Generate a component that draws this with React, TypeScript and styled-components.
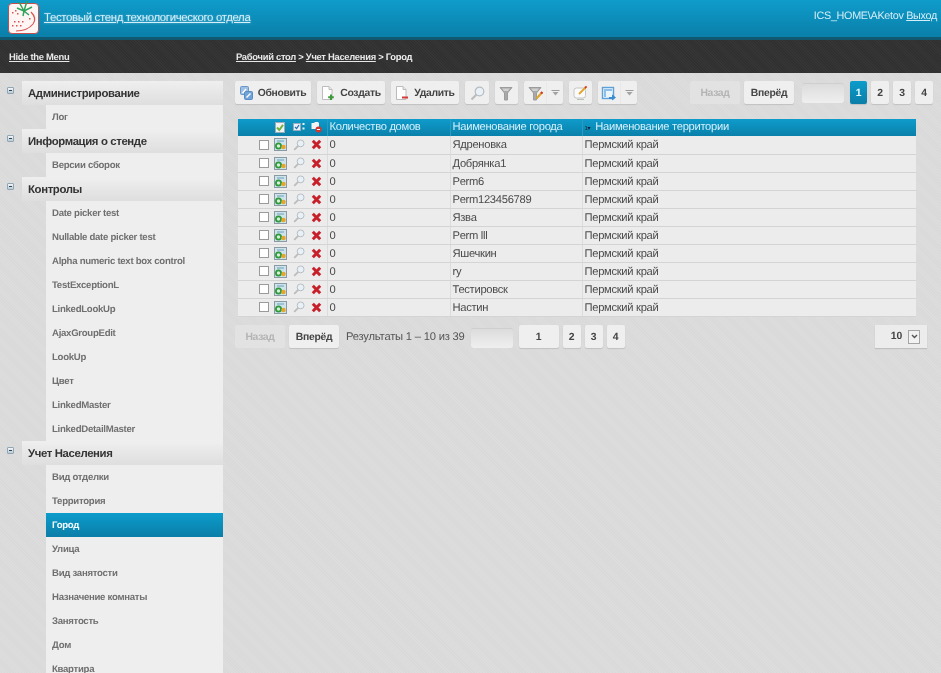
import { createGlobalStyle, styled } from 'styled-components'

const GlobalStyle = createGlobalStyle`
  html, body {
    margin: 0;
    height: 100%;
    overflow: hidden;
    background: #dcdcdc;
    font-family: "Liberation Sans", Arial, sans-serif;
    text-rendering: geometricPrecision;
  }
  * { box-sizing: border-box; }
`

const Page = styled.div`
  width: 941px;
  height: 673px;
  overflow: hidden;
  filter: blur(0.35px);
  background: repeating-linear-gradient(45deg, #dddddd 0 1px, #d9d9d9 1px 2px);
`

const Header = styled.header`
  height: 40px;
  display: flex;
  align-items: center;
  justify-content: space-between;
  padding: 0 4px 2px 8px;
  background: linear-gradient(#0f9ccb, #0a7fa9);
  border-bottom: 3px solid #10586f;
`

const Brand = styled.div`
  display: flex;
  align-items: center;
  gap: 5px;
`

const LogoBox = styled.div`
  width: 31px;
  height: 31px;
  margin-top: 1px;
  background: #fdf6f5;
  border: 1px solid #c0504d;
  border-radius: 4px;
  svg {
    display: block;
    overflow: visible;
  }
`

const BrandLink = styled.a`
  color: #d3f0fa;
  font-size: 11.4px;
  letter-spacing: -0.33px;
  text-decoration: underline;
  text-shadow: 0 0 2px rgba(255, 255, 255, 0.4);
`

const UserBox = styled.div`
  color: #d3eef8;
  font-size: 10.8px;
  letter-spacing: -0.3px;
  margin-bottom: 3px;
  a {
    color: #d3eef8;
    text-decoration: underline;
  }
`

const NavBar = styled.nav`
  height: 33px;
  display: flex;
  align-items: center;
  padding-left: 9px;
  color: #eee;
  font-size: 9.4px;
  letter-spacing: -0.28px;
  font-weight: bold;
  background: repeating-linear-gradient(45deg, #353535 0 1px, #303030 1px 2px);
  a {
    color: #e8e8e8;
    text-decoration: underline;
  }
`

const MenuToggle = styled.a`
  width: 227px;
`

const Body = styled.div`
  display: flex;
  padding-top: 8px;
`

const Sidebar = styled.aside`
  width: 223px;
  flex: none;
`

const GroupRow = styled.div`
  height: 24px;
  margin-left: 22px;
  position: relative;
  display: flex;
  align-items: center;
  padding: 2px 0 0 6px;
  color: #333;
  font-size: 11.4px;
  letter-spacing: -0.38px;
  font-weight: bold;
  background: linear-gradient(#efefef, #dedede);
`

const Toggle = styled.span`
  position: absolute;
  left: -15px;
  top: 6px;
  width: 7px;
  height: 7px;
  border: 1px solid #8fa6b4;
  border-radius: 1px;
  background: linear-gradient(#f4f7f9, #b9c9d3);
  &::after {
    content: '';
    position: absolute;
    left: 1px;
    right: 1px;
    top: 2px;
    height: 1px;
    background: #345;
  }
`

const MenuItem = styled.div<{ $active?: boolean }>`
  height: 24px;
  margin-left: 46px;
  display: flex;
  align-items: center;
  padding: 1px 0 0 6px;
  font-size: 9.6px;
  letter-spacing: -0.28px;
  font-weight: bold;
  color: ${(p) => (p.$active ? '#f2fbff' : '#707070')};
  background: ${(p) => (p.$active ? 'linear-gradient(#0c9ccb, #0a7ea8)' : '#eeeeee')};
`

const Main = styled.main`
  flex: 1;
  min-width: 0;
  padding-left: 12px;
`

const Toolbar = styled.div`
  height: 24px;
  display: flex;
  align-items: flex-start;
  gap: 6px;
  padding-right: 8px;
`

const Btn = styled.div<{ $w?: number; $disabled?: boolean; $active?: boolean; $split?: boolean }>`
  height: 23px;
  ${(p) => (p.$w ? `width: ${p.$w}px;` : '')}
  flex: none;
  display: flex;
  align-items: center;
  justify-content: center;
  gap: ${(p) => (p.$split ? 0 : 5)}px;
  padding-top: 1px;
  font-size: 10.4px;
  letter-spacing: -0.33px;
  font-weight: bold;
  border-radius: 2px;
  color: ${(p) => (p.$active ? '#e8f8ff' : p.$disabled ? '#b4b4b4' : '#444')};
  background: ${(p) =>
    p.$active ? 'linear-gradient(#0c9ccb, #0a7ea8)' : p.$disabled ? '#e2e2e2' : '#efefef'};
  box-shadow: ${(p) => (p.$disabled ? 'none' : '0 1px 1px rgba(0, 0, 0, 0.12)')};
`

const Divider = styled.span`
  width: 1px;
  height: 22px;
  background: #e8e8e8;
  margin: 0 4px 0 3px;
`

const Spacer = styled.div`
  flex: 1;
`

const NavPair = styled.div`
  display: flex;
  gap: 4px;
  margin-right: 2px;
`

const PageInput = styled.div<{ $w: number }>`
  width: ${(p) => p.$w}px;
  height: 20px;
  margin-top: 2px;
  flex: none;
  border-radius: 3px;
  background: linear-gradient(#dcdcdc, #efefef);
  border-top: 1px solid #cfcfcf;
`

const PageNums = styled.div`
  display: flex;
  gap: 4px;
`

const Grid = styled.table`
  width: 678px;
  margin: 14px 0 0 3px;
  border-collapse: collapse;
  table-layout: fixed;
  font-size: 11.2px;
  letter-spacing: -0.3px;
  color: #4a4a4a;
`

const HeadCell = styled.th`
  height: 17px;
  padding: 0 0 1px 2px;
  font-weight: normal;
  text-align: left;
  white-space: nowrap;
  color: #d5f0fa;
  background: linear-gradient(#0e9bcb, #0a80aa);
  border-left: 1px solid #2a9cc2;
  &:first-child { border-left: 0; }
`

const SortMark = styled.span`
  font-size: 6px;
  color: #123;
  margin-right: 5px;
`

const Cell = styled.td`
  height: 18px;
  padding: 1px 0 0 2px;
  background: #ececec;
  border-left: 1px solid #dcdcdc;
  border-bottom: 1px solid #d4d4d4;
  white-space: nowrap;
  &:first-child { border-left: 0; padding-top: 0; }
`

const ActionCell = styled.div`
  display: flex;
  align-items: center;
  justify-content: flex-end;
  gap: 6px;
  padding-right: 5px;
`

const HeadCheck = styled.span`
  display: flex;
  margin-right: 2px;
`

const CheckBox = styled.span`
  width: 10px;
  height: 10px;
  flex: none;
  background: #fff;
  border: 1px solid #9a9a9a;
  margin-right: -1px;
`

const Pager = styled.div`
  display: flex;
  align-items: center;
  gap: 6px;
  margin-top: 8px;
  padding-right: 14px;
  height: 24px;
`

const PagerText = styled.span`
  font-size: 11.2px;
  letter-spacing: -0.2px;
  color: #555;
  margin-left: -1px;
`

const PageSize = styled.div`
  width: 52px;
  height: 23px;
  flex: none;
  display: flex;
  align-items: center;
  justify-content: flex-end;
  gap: 6px;
  padding-right: 7px;
  font-size: 10.4px;
  letter-spacing: -0.2px;
  font-weight: bold;
  color: #444;
  background: #ececec;
  box-shadow: 0 1px 1px rgba(0, 0, 0, 0.12);
`

const SizeArrow = styled.span`
  width: 12px;
  height: 14px;
  border: 1px solid #a5a5a5;
  background: #f2f2f2;
  display: flex;
  align-items: center;
  justify-content: center;
`

const Logo = () => (
  <LogoBox>
    <svg width="29" height="29" viewBox="0 0 29 29">
      <path d="M22 8 C26 12 27 16 24 20 C20 25 13 27 7 27" fill="none" stroke="#d9534f" strokeWidth="1.2" />
      <path d="M15 7 L10 -2 M15 7 L18 -3 M15 7 L8 4 M15 7 L23 3 M15 7 L14 12 M15 7 L20 11" stroke="#2fa35a" strokeWidth="1.5" />
      <g fill="#d9534f">
        <rect x="6" y="6" width="1.5" height="1.5" />
        <rect x="3" y="8" width="1.5" height="1.5" />
        <rect x="8" y="9" width="1.5" height="1.5" />
        <rect x="5" y="17" width="1.5" height="1.5" />
        <rect x="9" y="17" width="1.5" height="1.5" />
        <rect x="13" y="17" width="1.5" height="1.5" />
        <rect x="3" y="21" width="1.5" height="1.5" />
        <rect x="7" y="21" width="1.5" height="1.5" />
        <rect x="11" y="21" width="1.5" height="1.5" />
        <rect x="20" y="14" width="1.5" height="1.5" />
      </g>
    </svg>
  </LogoBox>
)

const RefreshIcon = () => (
  <svg width="13" height="14" viewBox="0 0 13 14">
    <rect x="0.5" y="0.5" width="8" height="8" rx="1" fill="#9dbfe4" stroke="#6b96c8" />
    <rect x="4.5" y="5.5" width="8" height="8" rx="1" fill="#6fa3da" stroke="#5a8bc2" />
    <path d="M2.5 7 L6 3 M6.5 11.5 L10.5 7.5" stroke="#fff" strokeWidth="1.4" />
  </svg>
)

const PageIcon = ({ sign }: { sign: 'plus' | 'minus' }) => (
  <svg width="14" height="16" viewBox="0 0 14 16">
    <path d="M1.5 1.5 H8 L11 4.5 V14.5 H1.5 Z" fill="#fff" stroke="#bcbcbc" />
    <path d="M8 1.5 V4.5 H11" fill="#e6e6e6" stroke="#bcbcbc" />
    {sign === 'plus' ? (
      <path d="M10 9.5 V15 M7.2 12.2 H12.8" stroke="#3c9a3c" strokeWidth="2" />
    ) : (
      <path d="M7 12.5 H13" stroke="#d33a3a" strokeWidth="2" />
    )}
  </svg>
)

const Magnifier = ({ size = 15 }: { size?: number }) => (
  <svg width={size} height={size} viewBox="0 0 15 15">
    <circle cx="9.5" cy="5.5" r="4.3" fill="#eaf1f6" stroke="#b4bcc2" strokeWidth="1.2" />
    <path d="M6.5 8.5 L1.5 13.5" stroke="#bcbcbc" strokeWidth="2.2" />
  </svg>
)

const FunnelIcon = ({ pencil }: { pencil?: boolean }) => (
  <svg width="15" height="15" viewBox="0 0 15 15">
    <path d="M1 1.5 H13 L8.5 7 V14 H5.5 V7 Z" fill="#a8a8a8" stroke="#9c9c9c" />
    <path d="M3 2.5 H11 L9 5 H5 Z" fill="#d0d0d0" />
    {pencil && <path d="M8.5 12.5 L14 6.5" stroke="#e0a52c" strokeWidth="2.2" />}
    {pencil && <path d="M13 7.6 L14.4 6" stroke="#d8342c" strokeWidth="2.2" />}
  </svg>
)

const Caret = () => (
  <svg width="9" height="6" viewBox="0 0 9 6">
    <path d="M0.5 0.5 H8.5" stroke="#9a9a9a" />
    <path d="M1.5 2 H7.5 L4.5 5.5 Z" fill="#a4a4a4" />
  </svg>
)

const NoteIcon = () => (
  <svg width="16" height="16" viewBox="0 0 16 16">
    <rect x="1" y="3" width="11.5" height="10" rx="2.5" fill="#fafafa" stroke="#c4c4c4" />
    <path d="M6 9 L12.5 2.5" stroke="#e0a52c" strokeWidth="1.8" />
    <path d="M12 3 L13.6 1.4" stroke="#d8342c" strokeWidth="1.8" />
    <path d="M4 14.5 H11" stroke="#b8c4b0" />
  </svg>
)

const ExportIcon = () => (
  <svg width="16" height="15" viewBox="0 0 16 15">
    <rect x="1.5" y="1.5" width="11" height="11" fill="#eaf4fb" stroke="#5fa0d6" strokeWidth="1.4" />
    <path d="M3 3 H11 V5 H5 V11 H3 Z" fill="#8dbfe8" />
    <path d="M8 11 H11 V8.5 L15 11.5 L11 14.5 V13 H8 Z" fill="#3a8bd0" />
  </svg>
)

const EditIcon = () => (
  <svg width="13" height="13" viewBox="0 0 13 13">
    <rect x="0.5" y="0.5" width="12" height="12" fill="#cfe3ec" stroke="#8a9aa2" />
    <circle cx="4.5" cy="8" r="2.6" fill="#d8efd8" stroke="#2f9a3c" strokeWidth="1.8" />
    <circle cx="9.5" cy="9" r="2.2" fill="#e6a52b" />
    <path d="M3 3 H10" stroke="#6aa0b8" />
  </svg>
)

const DeleteIcon = () => (
  <svg width="11" height="11" viewBox="0 0 11 11">
    <path d="M1.8 1.8 L9.2 9.2 M9.2 1.8 L1.8 9.2" stroke="#c8202a" strokeWidth="3" />
  </svg>
)

const HeadCheckIcon = () => (
  <svg width="10" height="11" viewBox="0 0 10 11">
    <rect x="0.5" y="0.5" width="9" height="10" fill="#f2f2f2" stroke="#9ab" />
    <path d="M2 5.5 L4.3 8 L8 2.8" stroke="#6db33f" strokeWidth="2" fill="none" />
  </svg>
)

const HeadSelectIcon = () => (
  <svg width="12" height="10" viewBox="0 0 12 10">
    <rect x="0.5" y="1.5" width="7" height="7" fill="#e8f1f8" stroke="#9ab" />
    <path d="M2 5 L3.6 6.6 L6 3" stroke="#2a6db0" strokeWidth="1.3" fill="none" />
    <path d="M9.5 2 H11.5 M9.5 6.5 H11.5" stroke="#eaf6fb" strokeWidth="2" />
  </svg>
)

const HeadDeleteIcon = () => (
  <svg width="11" height="12" viewBox="0 0 11 12">
    <path d="M0.5 2 H3 L4 1 H7 L8 2 V8 H0.5 Z" fill="#f4f4f4" />
    <circle cx="7.5" cy="8.5" r="3" fill="#d8342c" />
    <path d="M5.9 8.5 H9.1" stroke="#fff" />
  </svg>
)

const DownIcon = () => (
  <svg width="7" height="5" viewBox="0 0 7 5">
    <path d="M1 1 L3.5 3.5 L6 1" stroke="#555" strokeWidth="1.4" fill="none" />
  </svg>
)

const menu: { title: string; items: string[] }[] = [
  { title: 'Администрирование', items: ['Лог'] },
  { title: 'Информация о стенде', items: ['Версии сборок'] },
  {
    title: 'Контролы',
    items: [
      'Date picker test',
      'Nullable date picker test',
      'Alpha numeric text box control',
      'TestExceptionL',
      'LinkedLookUp',
      'AjaxGroupEdit',
      'LookUp',
      'Цвет',
      'LinkedMaster',
      'LinkedDetailMaster',
    ],
  },
  {
    title: 'Учет Населения',
    items: [
      'Вид отделки',
      'Территория',
      'Город',
      'Улица',
      'Вид занятости',
      'Назначение комнаты',
      'Занятость',
      'Дом',
      'Квартира',
    ],
  },
]

const cities = [
  'Ядреновка',
  'Добрянка1',
  'Perm6',
  'Perm123456789',
  'Язва',
  'Perm lll',
  'Яшечкин',
  'ry',
  'Тестировск',
  'Настин',
]

function App() {
  return (
    <Page>
      <GlobalStyle />
      <Header>
        <Brand>
          <Logo />
          <BrandLink>Тестовый стенд технологического отдела</BrandLink>
        </Brand>
        <UserBox>
          ICS_HOME\AKetov <a>Выход</a>
        </UserBox>
      </Header>
      <NavBar>
        <MenuToggle>Hide the Menu</MenuToggle>
        <span>
          <a>Рабочий стол</a> &gt; <a>Учет Населения</a> &gt; Город
        </span>
      </NavBar>
      <Body>
        <Sidebar>
          {menu.map((group) => (
            <div key={group.title}>
              <GroupRow>
                <Toggle />
                {group.title}
              </GroupRow>
              {group.items.map((item) => (
                <MenuItem key={item} $active={item === 'Город'}>
                  {item}
                </MenuItem>
              ))}
            </div>
          ))}
        </Sidebar>
        <Main>
          <Toolbar>
            <Btn $w={76}>
              <RefreshIcon />
              Обновить
            </Btn>
            <Btn $w={68}>
              <PageIcon sign="plus" />
              Создать
            </Btn>
            <Btn $w={68}>
              <PageIcon sign="minus" />
              Удалить
            </Btn>
            <Btn $w={24}>
              <Magnifier />
            </Btn>
            <Btn $w={23}>
              <FunnelIcon />
            </Btn>
            <Btn $w={39} $split>
              <FunnelIcon pencil />
              <Divider />
              <Caret />
            </Btn>
            <Btn $w={23}>
              <NoteIcon />
            </Btn>
            <Btn $w={39} $split>
              <ExportIcon />
              <Divider />
              <Caret />
            </Btn>
            <Spacer />
            <NavPair>
              <Btn $w={50} $disabled>
                Назад
              </Btn>
              <Btn $w={50}>Вперёд</Btn>
            </NavPair>
            <PageInput $w={42} />
            <PageNums>
              <Btn $w={17} $active>
                1
              </Btn>
              <Btn $w={18}>2</Btn>
              <Btn $w={18}>3</Btn>
              <Btn $w={18}>4</Btn>
            </PageNums>
          </Toolbar>
          <Grid>
            <colgroup>
              <col style={{ width: 89 }} />
              <col style={{ width: 123 }} />
              <col style={{ width: 132 }} />
              <col />
            </colgroup>
            <thead>
              <tr>
                <HeadCell>
                  <ActionCell>
                    <HeadCheck>
                      <HeadCheckIcon />
                    </HeadCheck>
                    <HeadSelectIcon />
                    <HeadDeleteIcon />
                  </ActionCell>
                </HeadCell>
                <HeadCell>Количество домов</HeadCell>
                <HeadCell>Наименование города</HeadCell>
                <HeadCell>
                  <SortMark>1▾</SortMark>
                  Наименование территории
                </HeadCell>
              </tr>
            </thead>
            <tbody>
              {cities.map((city) => (
                <tr key={city}>
                  <Cell>
                    <ActionCell>
                      <CheckBox />
                      <EditIcon />
                      <Magnifier size={12} />
                      <DeleteIcon />
                    </ActionCell>
                  </Cell>
                  <Cell>0</Cell>
                  <Cell>{city}</Cell>
                  <Cell>Пермский край</Cell>
                </tr>
              ))}
            </tbody>
          </Grid>
          <Pager>
            <NavPair>
              <Btn $w={50} $disabled>
                Назад
              </Btn>
              <Btn $w={50}>Вперёд</Btn>
            </NavPair>
            <PagerText>Результаты 1 – 10 из 39</PagerText>
            <PageInput $w={42} />
            <PageNums>
              <Btn $w={40}>1</Btn>
              <Btn $w={18}>2</Btn>
              <Btn $w={18}>3</Btn>
              <Btn $w={18}>4</Btn>
            </PageNums>
            <Spacer />
            <PageSize>
              10
              <SizeArrow>
                <DownIcon />
              </SizeArrow>
            </PageSize>
          </Pager>
        </Main>
      </Body>
    </Page>
  )
}

export default App
